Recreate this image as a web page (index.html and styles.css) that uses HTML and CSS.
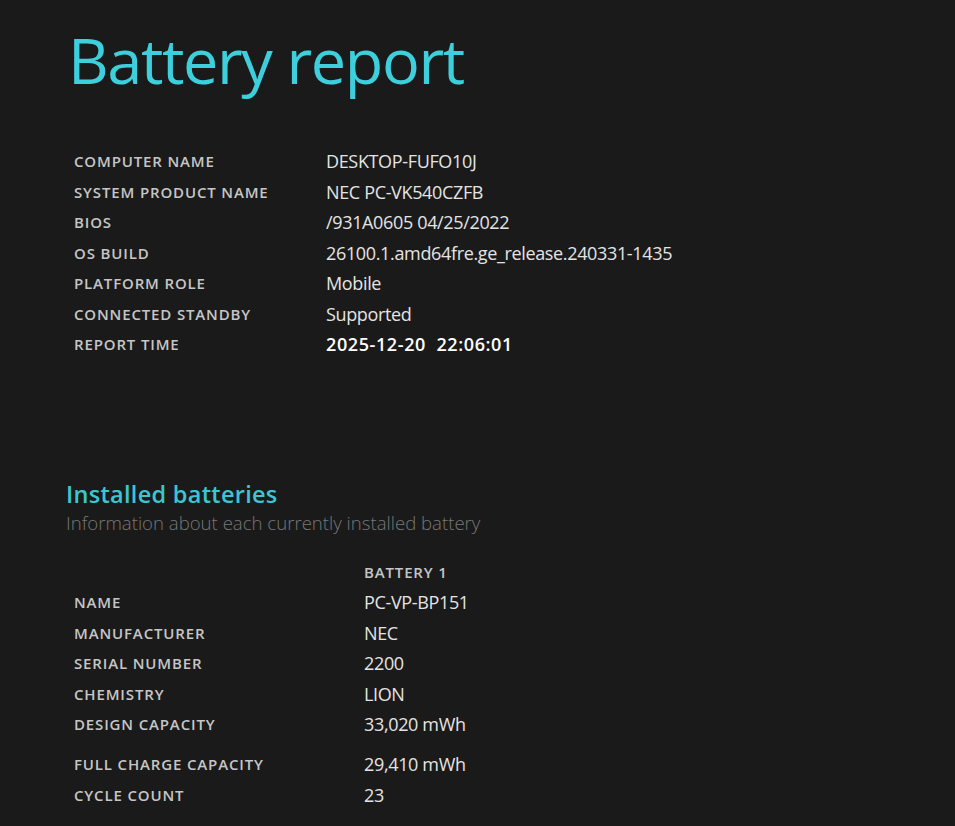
FILE: index.html
```html
<!DOCTYPE html>
<html lang="en">
<head>
<meta charset="utf-8">
<title>Battery report</title>
<link rel="stylesheet" href="styles.css">
</head>
<body>
<main class="report">
  <h1 class="title">Battery report</h1>

  <table class="info">
    <tr><td class="label">Computer name</td><td class="value">DESKTOP-FUFO10J</td></tr>
    <tr><td class="label">System product name</td><td class="value">NEC PC-VK540CZFB</td></tr>
    <tr><td class="label">BIOS</td><td class="value">/931A0605 04/25/2022</td></tr>
    <tr><td class="label">OS build</td><td class="value">26100.1.amd64fre.ge_release.240331-1435</td></tr>
    <tr><td class="label">Platform role</td><td class="value">Mobile</td></tr>
    <tr><td class="label">Connected standby</td><td class="value">Supported</td></tr>
    <tr><td class="label">Report time</td><td class="value strong">2025-12-20&nbsp; 22:06:01</td></tr>
  </table>

  <h2 class="section-title">Installed batteries</h2>
  <p class="explanation">Information about each currently installed battery</p>

  <table class="batteries">
    <tr><td class="label"></td><td class="label head">Battery 1</td></tr>
    <tr><td class="label">Name</td><td class="value">PC-VP-BP151</td></tr>
    <tr><td class="label">Manufacturer</td><td class="value">NEC</td></tr>
    <tr><td class="label">Serial number</td><td class="value">2200</td></tr>
    <tr><td class="label">Chemistry</td><td class="value">LION</td></tr>
    <tr><td class="label">Design capacity</td><td class="value">33,020 mWh</td></tr>
    <tr class="spaced"><td class="label">Full charge capacity</td><td class="value">29,410 mWh</td></tr>
    <tr><td class="label">Cycle count</td><td class="value">23</td></tr>
  </table>
</main>
</body>
</html>
```

FILE: styles.css
```css
html, body {
  margin: 0;
  padding: 0;
  background: #1a1a1a;
}

body {
  font-family: "Open Sans", "Noto Sans", sans-serif;
  color: #e8e8e8;
  height: 826px;
  overflow: hidden;
}

.report {
  padding-left: 66px;
  padding-top: 20px;
}

.title {
  margin: 0;
  padding-left: 2px;
  font-size: 63px;
  font-weight: 400;
  line-height: 80px;
  color: #3ecfdd;
  letter-spacing: -1.4px;
}

table {
  border-collapse: collapse;
  border-spacing: 0;
}

td {
  padding: 0 0 0 8px;
  height: 30.5px;
  vertical-align: middle;
  white-space: nowrap;
}

.info {
  margin-top: 46px;
}

.info td.label {
  width: 244px;
}

.batteries td.label:first-child {
  width: 282px;
}

.label {
  font-size: 15px;
  font-weight: 600;
  color: #c6c6c6;
  text-transform: uppercase;
  letter-spacing: 0.85px;
}

.value {
  font-size: 18px;
  font-weight: 400;
  color: #e4e4e4;
  letter-spacing: -0.35px;
}

.value.strong {
  font-weight: 600;
  color: #ffffff;
  letter-spacing: 0.6px;
}

.section-title {
  margin: 119px 0 0;
  font-size: 23.5px;
  font-weight: 600;
  line-height: 30px;
  color: #3cc6d3;
  letter-spacing: 0.3px;
}

.explanation {
  margin: 0;
  font-size: 18.6px;
  font-weight: 300;
  line-height: 28px;
  color: #777777;
}

.batteries {
  margin-top: 20px;
}

.batteries tr.spaced td {
  height: 30.5px;
  padding-top: 9.5px;
}
```
